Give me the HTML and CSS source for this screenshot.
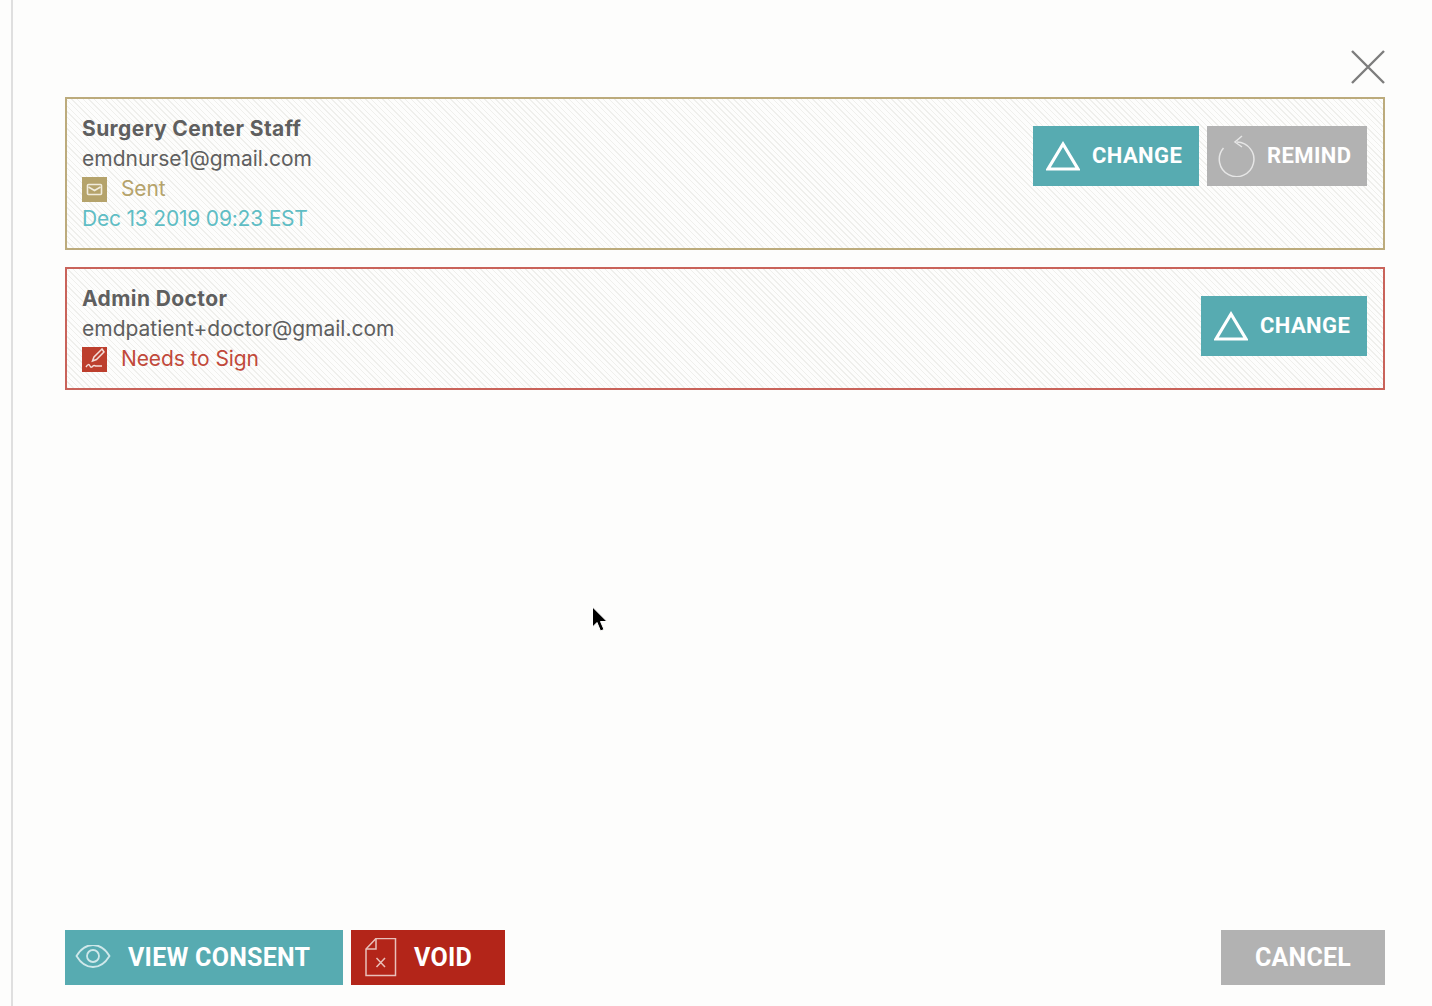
FILE: index.html
```html
<!DOCTYPE html>
<html lang="en">
<head>
  <meta charset="UTF-8">
  <meta name="viewport" content="width=device-width, initial-scale=1.0">
  <title>Signers</title>
  <link rel="stylesheet" href="styles.css">
</head>
<body>
  <div class="modal">
    <div class="close-row">
      <svg class="close" width="34" height="34" viewBox="0 0 34 34" fill="none" stroke="#7d7d7d" stroke-width="2.4"><path d="M1 1 33 33M33 1 1 33"/></svg>
    </div>

    <div class="signers">
      <div class="signer sent">
        <div class="info">
          <div class="name">Surgery Center Staff</div>
          <div>emdnurse1@gmail.com</div>
          <div class="status">
            <span class="badge">
              <svg width="25" height="25" viewBox="0 0 25 25" fill="none" stroke="#f1ecdc" stroke-width="1.6"><rect x="5.500" y="7.500" width="14" height="10" rx="1"/><path d="M6.500 10 12.500 13.500 18.500 10"/></svg>
            </span>
            Sent
          </div>
          <div class="date">Dec 13 2019 09:23 EST</div>
        </div>
        <div class="actions">
          <a class="btn teal change">
            <svg width="34" height="32" viewBox="0 0 34 32" fill="none" stroke="#fff" stroke-width="3.200"><path d="M17 4 32 29H2Z"/></svg>
            CHANGE
          </a>
          <a class="btn gray remind">
            <svg width="38" height="42" viewBox="0 0 38 42" fill="none" stroke="#e6e6e6" stroke-width="1.500"><path d="M19 7A17.300 17.300 0 1 1 5.500 13"/><path d="M24 1 17 7 24 12"/></svg>
            REMIND
          </a>
        </div>
      </div>

      <div class="signer needs">
        <div class="info">
          <div class="name">Admin Doctor</div>
          <div>emdpatient+doctor@gmail.com</div>
          <div class="status">
            <span class="badge">
              <svg width="25" height="25" viewBox="0 0 25 25" fill="none" stroke="#f3ddd8" stroke-width="1.500"><path d="M20 2 12 10l-1.500 4 4-1.500L22 5Z" fill="none"/><path d="M4 20c2-3 3-3 4-1s2 1 3 0 2 0 3 0h6"/></svg>
            </span>
            Needs to Sign
          </div>
        </div>
        <div class="actions">
          <a class="btn teal change">
            <svg width="34" height="32" viewBox="0 0 34 32" fill="none" stroke="#fff" stroke-width="3.200"><path d="M17 4 32 29H2Z"/></svg>
            CHANGE
          </a>
        </div>
      </div>
    </div>

    <div class="footer">
      <a class="btn teal large view">
        <svg width="36" height="26" viewBox="0 2 36 26" fill="none" stroke="#cfe8ea" stroke-width="1.800"><path d="M1.500 13C6 5.500 12 2 18 2s12 3.500 16.500 11C30 20.500 24 24 18 24S6 20.500 1.500 13Z"/><circle cx="18" cy="13" r="6"/></svg>
        VIEW CONSENT
      </a>
      <a class="btn red large void">
        <svg width="33" height="40" viewBox="0 1 33 40" fill="none" stroke="#e9c0ba" stroke-width="1.500"><path d="M12 1.500H31.500V38.500H2V12Z"/><path d="M12 1.500V12H2"/><path d="M12.500 21 21 30M21 21 12.500 30"/></svg>
        VOID
      </a>
      <a class="btn gray large cancel">CANCEL</a>
    </div>
  </div>

  <svg class="pointer" width="18" height="28" viewBox="0 0 18 28"><path d="M1.500 1V21L6 16.500 9.500 25 13 23.500 9.500 15.500H16Z" fill="#000" stroke="#fff" stroke-width="1"/></svg>
</body>
</html>
```

FILE: styles.css
```css
body {
  margin: 0;
  height: 1006px;
  overflow: hidden;
  font-family: "Inter", "Roboto", sans-serif;
  font-size: 21px;
  color: #5f5f5f;
  background: #fdfdfc;
}
.modal {
  box-sizing: border-box;
  height: 1006px;
  margin-left: 11px;
  padding: 50px 47px 21px 52px;
  border-left: 2px solid #dfdfdf;
  display: flex;
  flex-direction: column;
}
.close-row {
  display: flex;
  justify-content: flex-end;
  margin-bottom: 13px;
}
.close {
  display: block;
}
.signers {
  flex: 1;
  display: flex;
  flex-direction: column;
  gap: 17px;
}
.signer {
  display: flex;
  justify-content: space-between;
  padding: 15px 16px 14px 15px;
  border: 2px solid;
  line-height: 30px;
  background: repeating-linear-gradient(45deg, #efefec 0 1px, #fdfdfc 1px 4px);
}
.signer.sent { border-color: #bcab7c; }
.signer.needs { border-color: #c9635a; }
.name {
  font-weight: 700;
  letter-spacing: .4px;
}
.status {
  display: flex;
  align-items: center;
  gap: 14px;
  letter-spacing: -.1px;
}
.sent .status { color: #b5a36b; }
.needs .status { color: #c1493a; }
.badge {
  width: 25px;
  height: 25px;
  display: block;
}
.badge svg { display: block; }
.sent .badge { background: #b5a36b; }
.needs .badge { background: #bd3f2d; }
.date {
  color: #5fbdc4;
  letter-spacing: -.2px;
}
.actions {
  display: flex;
  gap: 8px;
  margin-top: 12px;
}
.btn {
  box-sizing: border-box;
  height: 60px;
  display: flex;
  align-items: center;
  color: #fff;
  font-family: "Roboto", sans-serif;
  font-size: 22px;
  font-weight: 700;
  letter-spacing: .4px;
  white-space: nowrap;
}
.btn svg { flex: none; }
.teal { background: #57abb1; }
.gray { background: #b2b2b2; }
.red { background: #b32519; }
.change {
  width: 166px;
  padding-left: 13px;
  gap: 12px;
}
.remind {
  width: 160px;
  padding-left: 11px;
  gap: 11px;
}
.footer {
  display: flex;
  gap: 8px;
}
.large {
  height: 55px;
  font-size: 25px;
  letter-spacing: .25px;
}
.view {
  width: 278px;
  padding-left: 10px;
  gap: 17px;
}
.void {
  width: 154px;
  padding-left: 13px;
  gap: 17px;
}
.cancel {
  width: 164px;
  margin-left: auto;
  justify-content: center;
}
.pointer {
  position: absolute;
  left: 591px;
  top: 606px;
}
```
